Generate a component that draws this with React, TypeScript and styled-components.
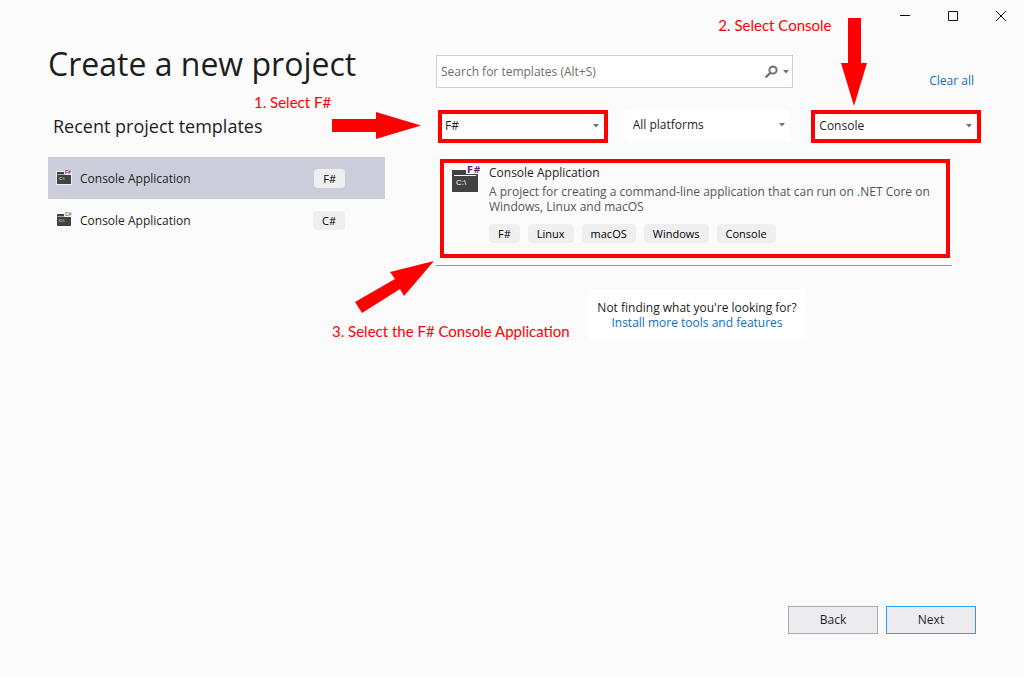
import React from "react";
import styled, { createGlobalStyle } from "styled-components";

const GlobalStyle = createGlobalStyle`
  * { box-sizing: border-box; }
  body {
    margin: 0;
    background: #fbfbfb;
    color: #1e1e1e;
    font: 12px/15px "Open Sans", "Noto Sans", sans-serif;
  }
  button, input, select { font: inherit; color: inherit; }
  h1, h2, h3, p, ul { margin: 0; padding: 0; }
`;

const Window = styled.div`
  min-height: 100vh;
  display: flex;
  flex-direction: column;
  overflow: hidden;
`;

const TitleBar = styled.header`
  display: flex;
  justify-content: flex-end;
  height: 32px;
`;

const WindowButton = styled.button`
  width: 48px;
  height: 32px;
  padding: 0;
  border: 0;
  background: none;
  display: grid;
  place-items: center;
  svg { display: block; }
`;

const Main = styled.main`
  flex: 1;
  display: grid;
  grid-template-columns: 337px minmax(0, 1fr);
  column-gap: 51px;
  padding: 0 48px;
`;

const Title = styled.h1`
  margin-top: 8px;
  font-size: 32px;
  line-height: 48px;
  font-weight: 400;
  white-space: nowrap;
`;

const RecentHeading = styled.h2`
  margin: 24px 0 16px;
  padding-left: 5px;
  font-size: 18px;
  line-height: 29px;
  font-weight: 400;
`;

const RecentList = styled.ul`
  list-style: none;
`;

const RecentButton = styled.button<{ $selected?: boolean }>`
  display: flex;
  align-items: center;
  width: 100%;
  height: 42px;
  padding: 0 40px 0 8px;
  border: 0;
  text-align: left;
  background: ${(p) => (p.$selected ? "#cccedb" : "transparent")};
`;

const RecentName = styled.span`
  flex: 1;
  padding-left: 8px;
`;

const Tag = styled.span`
  padding: 0 9px;
  border-radius: 4px;
  background: #efeff0;
  color: #000;
  font-size: 11px;
  line-height: 19px;
`;

const SearchRow = styled.div`
  display: flex;
  justify-content: space-between;
  align-items: center;
  margin-top: 23px;
  padding-right: 2px;
`;

const SearchBox = styled.div`
  display: flex;
  align-items: center;
  width: 357px;
  height: 33px;
  padding: 0 3px 0 4px;
  border: 1px solid #cccedb;
  background: #fff;
`;

const SearchInput = styled.input`
  flex: 1;
  min-width: 0;
  padding: 0;
  border: 0;
  outline: 0;
  background: none;
  &::placeholder { color: #6d6d6d; opacity: 1; }
`;

const SearchButton = styled.button`
  display: flex;
  align-items: center;
  gap: 5px;
  padding: 0;
  border: 0;
  background: none;
`;

const Link = styled.a`
  color: #0e70c0;
  text-decoration: none;
`;

const ClearLink = styled(Link)`
  align-self: flex-end;
`;

const Filters = styled.div`
  display: grid;
  grid-template-columns: repeat(3, 1fr);
  column-gap: 17px;
  margin: 22px -5px 0 2px;
`;

const Filter = styled.div<{ $marked?: boolean }>`
  position: relative;
  display: flex;
  align-items: center;
  height: 33px;
  ${(p) => (p.$marked ? "border: 4px solid #f00;" : "margin-right: 4px; border: solid #fbfbfb; border-width: 0 0 2px;")}
  background: #fff;
`;

const FilterSelect = styled.select<{ $inset: number }>`
  appearance: none;
  width: 100%;
  height: 100%;
  padding: 0 20px 2px ${(p) => p.$inset}px;
  border: 0;
  background: none;
`;

const FilterArrow = styled.span`
  position: absolute;
  right: 5px;
  top: 50%;
  margin-top: -3px;
  pointer-events: none;
  display: flex;
`;

const Results = styled.section`
  position: relative;
  width: 516px;
  margin-top: 16px;
  padding: 0 2px 7px 4px;
  border-bottom: 1px solid #9b9b9b;
`;

const Result = styled.article`
  display: flex;
  gap: 9px;
  height: 99px;
  padding: 2px 4px 0 8px;
  border: 4px solid #f00;
`;

const ResultBody = styled.div`
  flex: 1;
`;

const ResultName = styled.h3`
  font-size: 12px;
  line-height: 15px;
  font-weight: 400;
`;

const ResultText = styled.p`
  max-width: 445px;
  margin: 4px 0 10px;
  color: #555;
`;

const Tags = styled.div`
  display: flex;
  gap: 8px;
`;

const NotFound = styled.div`
  width: 216px;
  margin: 24px 0 0 153px;
  padding: 10px 0;
  background: #fff;
  text-align: center;
`;

const Footer = styled.footer`
  display: flex;
  justify-content: flex-end;
  gap: 8px;
  padding: 0 48px 43px;
`;

const FooterButton = styled.button<{ $primary?: boolean }>`
  width: 90px;
  height: 28px;
  padding: 0 0 2px;
  border: 1px solid ${(p) => (p.$primary ? "#3399ff" : "#acacac")};
  background: #ececf0;
`;

const Note = styled.span<{ $x: number; $y: number }>`
  position: absolute;
  left: ${(p) => p.$x}px;
  top: ${(p) => p.$y}px;
  color: #f00;
  font: 15px/18px Lato, "Open Sans", sans-serif;
  white-space: nowrap;
  pointer-events: none;
`;

const Arrow = styled.svg<{ $x: number; $y: number }>`
  position: absolute;
  left: ${(p) => p.$x}px;
  top: ${(p) => p.$y}px;
  fill: #f00;
  pointer-events: none;
`;

const Caret = () => (
  <svg width="6" height="4" viewBox="0 0 6 4" aria-hidden="true">
    <path d="M0 0h6L3 3.4z" fill="#717171" />
  </svg>
);

const SmallIcon = ({ lang, color, selected }: { lang: string; color: string; selected?: boolean }) => (
  <svg width="16" height="16" viewBox="0 0 16 16" aria-hidden="true">
    {selected && <path d="M0 1h8V0h8v15H0z" fill="#f6f6f6" opacity=".75" />}
    <path d="M1 2h7v3h7v9H1z" fill="#424242" />
    <path d="M1.500 4.500h7" stroke="#a5a5a5" />
    <text x="3" y="10" fontSize="4" fontWeight="700" fill="#ddd" fontFamily="Liberation Sans, sans-serif">C:\</text>
    <text x="9" y="4" fontSize="5" fontWeight="700" fill={color} fontFamily="Liberation Sans, sans-serif">{lang}</text>
  </svg>
);

const LargeIcon = () => (
  <svg width="28" height="28" viewBox="0 0 28 28" aria-hidden="true">
    <path d="M0 5h14v5h12v17H0z" fill="#424242" />
    <path d="M2 10.500h22" stroke="#fbfbfb" />
    <path d="M14 9.500h12" stroke="#424242" />
    <text x="4" y="20" fontSize="8" fill="#fff" fontFamily="Liberation Sans, sans-serif">C:\</text>
    <text x="15" y="8" fontSize="9" fontWeight="700" fill="#68217a" fontFamily="DejaVu Sans, sans-serif">F#</text>
  </svg>
);

export default function App() {
  return (
    <Window>
      <GlobalStyle />
      <TitleBar>
        <WindowButton aria-label="Minimize">
          <svg width="12" height="12" viewBox="0 0 12 12"><path d="M2 5.500h10" stroke="#111" /></svg>
        </WindowButton>
        <WindowButton aria-label="Maximize">
          <svg width="12" height="12" viewBox="0 0 12 12"><path d="M2.500 1.500h9v9h-9z" fill="none" stroke="#111" /></svg>
        </WindowButton>
        <WindowButton aria-label="Close">
          <svg width="12" height="12" viewBox="0 0 12 12"><path d="M2 1l10 10M12 1L2 11" stroke="#111" /></svg>
        </WindowButton>
      </TitleBar>
      <Main>
        <section>
          <Title>Create a new project</Title>
          <RecentHeading>Recent project templates</RecentHeading>
          <RecentList>
            <li>
              <RecentButton $selected>
                <SmallIcon lang="F#" color="#68217a" selected />
                <RecentName>Console Application</RecentName>
                <Tag>F#</Tag>
              </RecentButton>
            </li>
            <li>
              <RecentButton>
                <SmallIcon lang="C#" color="#388a34" />
                <RecentName>Console Application</RecentName>
                <Tag>C#</Tag>
              </RecentButton>
            </li>
          </RecentList>
        </section>
        <section>
          <SearchRow>
            <SearchBox>
              <SearchInput type="search" aria-label="Search for templates" placeholder="Search for templates (Alt+S)" />
              <SearchButton aria-label="Search">
                <svg width="14" height="14" viewBox="0 0 14 14" fill="none" stroke="#717171">
                  <circle cx="9" cy="5" r="3.600" strokeWidth="2" />
                  <path d="M6.500 7.700L1.500 12.500" strokeWidth="2.400" />
                </svg>
                <Caret />
              </SearchButton>
            </SearchBox>
            <ClearLink href="#clear">Clear all</ClearLink>
          </SearchRow>
          <Filters>
            <Filter $marked>
              <FilterSelect aria-label="Language" $inset={3}>
                <option>F#</option>
              </FilterSelect>
              <FilterArrow><Caret /></FilterArrow>
              <Note $x={-188} $y={-21}>1. Select F#</Note>
              <Arrow $x={-110} $y={-2} width="90" height="28" viewBox="0 0 90 28">
                <path d="M0 7h44V0l45 13.500L44 27v-7H0z" />
              </Arrow>
            </Filter>
            <Filter>
              <FilterSelect aria-label="Platform" $inset={8}>
                <option>All platforms</option>
              </FilterSelect>
              <FilterArrow><Caret /></FilterArrow>
            </Filter>
            <Filter $marked>
              <FilterSelect aria-label="Project type" $inset={4}>
                <option>Console</option>
              </FilterSelect>
              <FilterArrow><Caret /></FilterArrow>
              <Note $x={-97} $y={-98}>2. Select Console</Note>
              <Arrow $x={26} $y={-96} width="26" height="88" viewBox="0 0 26 88">
                <path d="M7 0h13v45h6L13 88 0 45h7z" />
              </Arrow>
            </Filter>
          </Filters>
          <Results>
            <Result>
              <LargeIcon />
              <ResultBody>
                <ResultName>Console Application</ResultName>
                <ResultText>
                  A project for creating a command-line application that can run on .NET Core on Windows, Linux and macOS
                </ResultText>
                <Tags>
                  <Tag>F#</Tag>
                  <Tag>Linux</Tag>
                  <Tag>macOS</Tag>
                  <Tag>Windows</Tag>
                  <Tag>Console</Tag>
                </Tags>
              </ResultBody>
            </Result>
            <Arrow $x={-81} $y={102} width="80" height="52" viewBox="0 0 80 52">
              <path d="M79 0L35 11l5 7L0 41l7 11 38-24 4 7z" />
            </Arrow>
            <Note $x={-104} $y={163}>3. Select the F# Console Application</Note>
          </Results>
          <NotFound>
            <p>Not finding what you're looking for?</p>
            <Link href="#install">Install more tools and features</Link>
          </NotFound>
        </section>
      </Main>
      <Footer>
        <FooterButton>Back</FooterButton>
        <FooterButton $primary>Next</FooterButton>
      </Footer>
    </Window>
  );
}
